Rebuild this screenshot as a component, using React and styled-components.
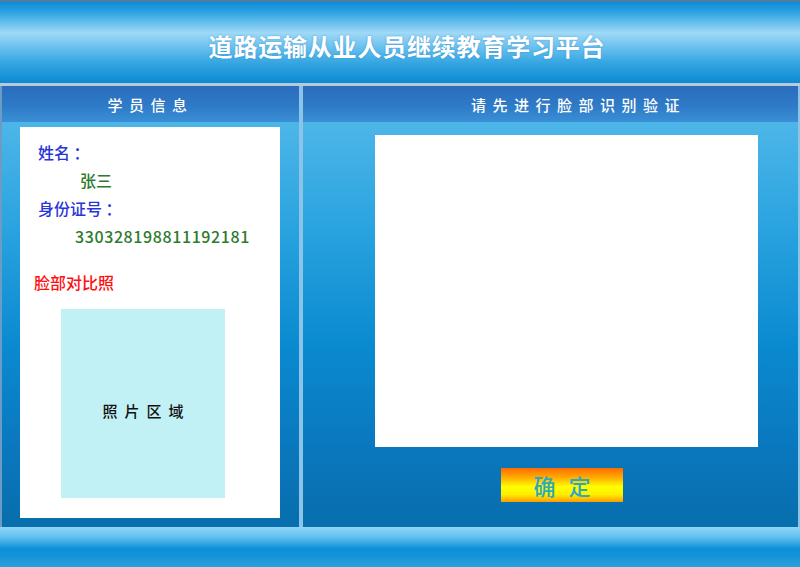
import React from "react";
import styled, { createGlobalStyle } from "styled-components";

const Global = createGlobalStyle`
  html, body { margin: 0; padding: 0; }
  body {
    width: 800px;
    height: 567px;
    overflow: hidden;
    font-family: "Noto Sans CJK SC", "Noto Sans", sans-serif;
  }
`;

const Page = styled.div`
  width: 800px;
  height: 567px;
  display: flex;
  flex-direction: column;
  background: #0a80c8;
`;

const Header = styled.header`
  height: 83px;
  box-sizing: border-box;
  border-top: 2px solid #4f7f9f;
  display: flex;
  align-items: center;
  justify-content: center;
  background: linear-gradient(
    to bottom,
    #0f8ad4 0%,
    #2aa2e2 12%,
    #9fd9f6 38%,
    #6cc2ee 55%,
    #35a6e2 75%,
    #0c8ad2 100%
  );
`;

const Title = styled.h1`
  margin: 0;
  padding: 6px 0 0 14px;
  font-size: 24px;
  font-weight: 700;
  color: #ffffff;
  letter-spacing: 0.8px;
  text-shadow: 0 0 2px rgba(40, 120, 190, 0.6);
`;

const Main = styled.main`
  flex: 1;
  display: flex;
  box-sizing: border-box;
  border-top: 3px solid #bcc8d8;
`;

const Panel = styled.section`
  display: flex;
  flex-direction: column;
  box-sizing: border-box;
  width: ${(p) => p.$width};
  flex: ${(p) => (p.$grow ? 1 : "none")};
  border-left: 2px solid ${(p) => p.$edge};
  border-right: 2px solid #8cc4e8;
`;

const PanelTitle = styled.div`
  height: 36px;
  display: flex;
  align-items: center;
  justify-content: center;
  padding-left: ${(p) => p.$offset || 0}px;
  font-size: 15px;
  font-weight: 500;
  letter-spacing: 6.5px;
  color: #ffffff;
  background: linear-gradient(to bottom, #2a6cbc 0%, #2f7cc8 60%, #3a8fd6 100%);
`;

const PanelBody = styled.div`
  flex: 1;
  display: flex;
  flex-direction: column;
  align-items: ${(p) => p.$align || "stretch"};
  padding: ${(p) => p.$pad};
  background: linear-gradient(to bottom, #4db6e8 0%, #2ba4e0 25%, #0a8ad0 55%, #0a78be 80%, #086ead 100%);
`;

const InfoCard = styled.div`
  width: 260px;
  height: 391px;
  box-sizing: border-box;
  background: #ffffff;
  padding: 11px 0 0 18px;
  display: flex;
  flex-direction: column;
`;

const Label = styled.div`
  font-size: 16px;
  font-weight: 500;
  line-height: 28px;
  color: #2a35d8;
`;

const Value = styled.div`
  font-size: 16px;
  font-weight: 500;
  line-height: 28px;
  color: #2e7a2e;
  letter-spacing: ${(p) => p.$spacing || 0}px;
  padding-left: ${(p) => p.$indent}px;
`;

const Section = styled.div`
  margin: 18px 0 0 -4px;
  font-size: 16px;
  font-weight: 500;
  line-height: 28px;
  color: #ff1010;
`;

const Photo = styled.div`
  margin: 13px 0 0 23px;
  width: 164px;
  height: 189px;
  background: #c2f1f5;
  display: flex;
  align-items: center;
  justify-content: center;
  font-size: 15px;
  font-weight: 500;
  letter-spacing: 7px;
  padding: 14px 0 0 7px;
  box-sizing: border-box;
  color: #111111;
`;

const Camera = styled.div`
  width: 383px;
  height: 312px;
  background: #ffffff;
`;

const Confirm = styled.button`
  margin: 21px 0 0 126px;
  width: 122px;
  height: 34px;
  border: none;
  padding: 0 0 0 13px;
  font-family: inherit;
  font-size: 22px;
  font-weight: 500;
  letter-spacing: 13px;
  color: #2aa9c2;
  cursor: pointer;
  display: flex;
  align-items: center;
  justify-content: center;
  background: linear-gradient(to bottom, #ff6a00 0%, #ffb000 30%, #ffff00 55%, #ffee00 78%, #ff9a00 100%);
`;

const Footer = styled.footer`
  height: 40px;
  background: linear-gradient(
    to bottom,
    #8ed6f7 0%,
    #62c0ef 25%,
    #0c8fd8 55%,
    #1794d8 75%,
    #2aa0dd 100%
  );
`;

export default function App() {
  return (
    <Page>
      <Global />
      <Header>
        <Title>道路运输从业人员继续教育学习平台</Title>
      </Header>
      <Main>
        <Panel $width="301px" $edge="#6a9cc4">
          <PanelTitle>学员信息</PanelTitle>
          <PanelBody $pad="5px 0 0 18px">
            <InfoCard>
              <Label>姓名 ：</Label>
              <Value $indent={42}>张三</Value>
              <Label>身份证号 ：</Label>
              <Value $indent={37} $spacing={0.6}>330328198811192181</Value>
              <Section>脸部对比照</Section>
              <Photo>照片区域</Photo>
            </InfoCard>
          </PanelBody>
        </Panel>
        <Panel $grow $edge="#8cc4e8">
          <PanelTitle $offset={56}>请先进行脸部识别验证</PanelTitle>
          <PanelBody $pad="13px 0 0 72px">
            <Camera />
            <Confirm>确定</Confirm>
          </PanelBody>
        </Panel>
      </Main>
      <Footer />
    </Page>
  );
}
